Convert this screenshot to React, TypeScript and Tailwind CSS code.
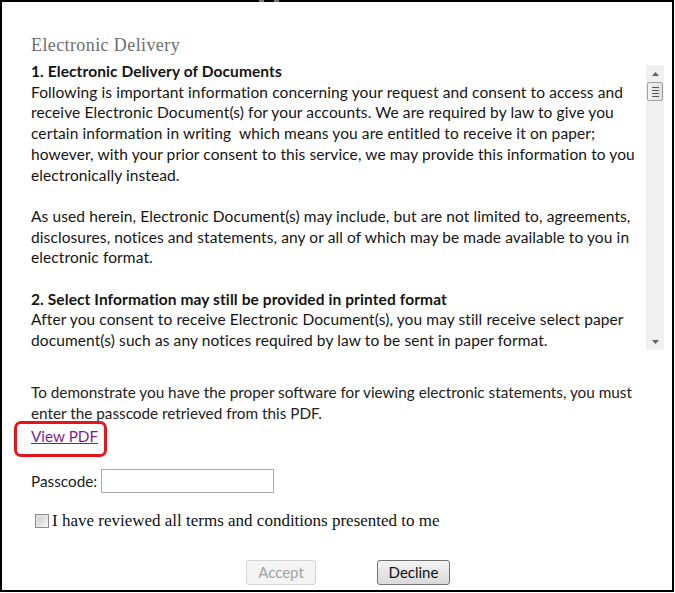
import React from "react";

const body = { fontFamily: "Lato, 'Open Sans', sans-serif" } as React.CSSProperties;
const serif = { fontFamily: "'Liberation Serif', serif" } as React.CSSProperties;

function Scrollbar() {
  return (
    <div className="mt-[4px] flex h-[285px] w-[18px] shrink-0 flex-col items-center bg-[#f0f0f0]">
      <div className="flex h-[17px] w-full items-center justify-center">
        <svg width="7" height="4" viewBox="0 0 7 4">
          <path d="M3.5 0 L7 4 L0 4 Z" fill="#606060" />
        </svg>
      </div>
      <div className="flex h-[19px] w-[16px] flex-col items-center justify-center gap-[2px] rounded-[2px] border border-[#a0a0a0] bg-gradient-to-r from-[#f4f4f4] to-[#dedede]">
        <div className="h-px w-[7px] bg-[#555]" />
        <div className="h-px w-[7px] bg-[#555]" />
        <div className="h-px w-[7px] bg-[#555]" />
        <div className="h-px w-[7px] bg-[#555]" />
      </div>
      <div className="flex-1" />
      <div className="flex h-[17px] w-full items-center justify-center">
        <svg width="7" height="4" viewBox="0 0 7 4">
          <path d="M0 0 L7 0 L3.5 4 Z" fill="#606060" />
        </svg>
      </div>
    </div>
  );
}

export default function App() {
  return (
    <div className="h-[593px] w-[675px] bg-white">
      <div className="relative h-[592px] w-[674px] border-x-2 border-b-2 border-t-[2px] border-black bg-white">
        <div className="absolute left-[257px] top-[-2px] h-[2px] w-[5px] bg-[#777]" />
        <div className="absolute left-[272px] top-[-2px] h-[2px] w-[5px] bg-[#777]" />
        <div className="pl-[29px] pr-[8px] pt-[33px]">
          <div className="text-[18px] leading-[20px] tracking-[0.4px] text-[#6e6e6e]" style={serif}>
            Electronic Delivery
          </div>
          <div className="mt-[6px] flex">
            <div
              className="h-[289px] flex-1 overflow-hidden whitespace-nowrap pr-[4px] text-[15.5px] leading-[20.7px] tracking-[0.1px] text-[#141414]"
              style={body}
            >
              <div className="font-bold tracking-[0.1px]">1. Electronic Delivery of Documents</div>
              <div>
                Following is important information concerning your request and consent to access and
                <br />
                receive Electronic Document(s) for your accounts. We are required by law to give you
                <br />
                certain information in writing&nbsp; which means you are entitled to receive it on paper;
                <br />
                however, with your prior consent to this service, we may provide this information to you
                <br />
                electronically instead.
              </div>
              <div className="h-[20.7px]" />
              <div>
                As used herein, Electronic Document(s) may include, but are not limited to, agreements,
                <br />
                disclosures, notices and statements, any or all of which may be made available to you in
                <br />
                electronic format.
              </div>
              <div className="h-[20.7px]" />
              <div className="font-bold tracking-[0.1px]">
                2. Select Information may still be provided in printed format
              </div>
              <div>
                After you consent to receive Electronic Document(s), you may still receive select paper
                <br />
                document(s) such as any notices required by law to be sent in paper format.
              </div>
            </div>
            <Scrollbar />
          </div>

          <div
            className="mt-[32px] whitespace-nowrap text-[15.3px] leading-[21px] text-[#222]"
            style={body}
          >
            <div>
              To demonstrate you have the proper software for viewing electronic statements, you must
              <br />
              enter the passcode retrieved from this PDF.
            </div>
            <div className="relative mt-[2px] inline-block">
              <a href="#" className="text-[#7b1f8c] underline">
                View PDF
              </a>
              <div className="absolute left-[-17px] top-[-5px] h-[36px] w-[93px] rounded-[7px] border-[3px] border-[#e8141b]" />
            </div>
            <div className="mt-[22px] flex items-center gap-[4px]">
              <span>Passcode:</span>
              <input
                type="text"
                className="h-[24px] w-[173px] border border-[#ababab] bg-white outline-none"
              />
            </div>
          </div>

          <div className="mt-[18px] flex items-center pl-[4px]">
            <div className="h-[14px] w-[14px] border border-[#8c8c8c] bg-gradient-to-br from-[#dcdcdc] to-[#f6f6f6] p-[2px]">
              <div className="h-full w-full bg-gradient-to-br from-[#d0d0d0] to-[#eeeeee]" />
            </div>
            <span className="ml-[3px] text-[17px] leading-[20px] text-[#111]" style={serif}>
              I have reviewed all terms and conditions presented to me
            </span>
          </div>

          <div className="mt-[29px] flex pl-[215px]" style={body}>
            <button
              disabled
              className="h-[25px] w-[70px] rounded-[3px] border border-[#d4d4d4] bg-[#f4f4f4] text-[15px] text-[#a3a3a3]"
            >
              Accept
            </button>
            <button className="ml-[61px] h-[25px] w-[73px] rounded-[3px] border border-[#707070] bg-gradient-to-b from-[#f3f3f3] to-[#dadada] text-[15px] text-[#111]">
              Decline
            </button>
          </div>
        </div>
      </div>
    </div>
  );
}
